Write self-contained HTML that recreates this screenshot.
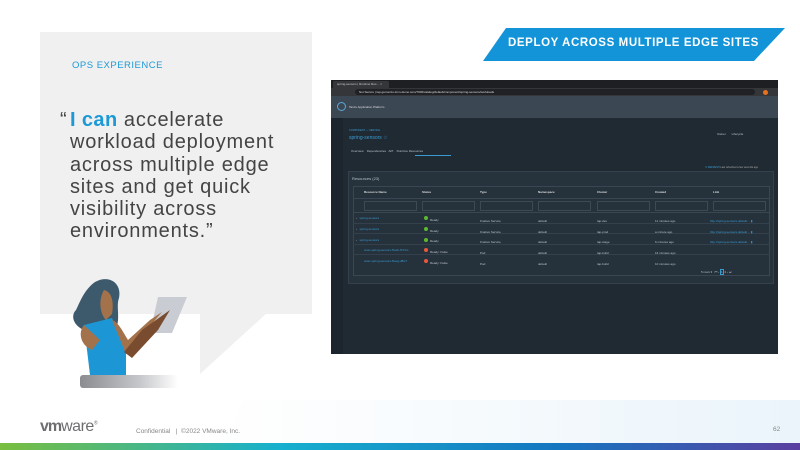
<!DOCTYPE html>
<html><head><meta charset="utf-8"><style>
*{margin:0;padding:0;box-sizing:border-box}
body{width:800px;height:450px;position:relative;overflow:hidden;background:#fff;font-family:"Liberation Sans",sans-serif}
.a{position:absolute}
.t{font-size:3px;color:#b8c0c8;white-space:nowrap}
.l{font-size:3px;color:#3a9bd1;white-space:nowrap}
</style></head><body>
<!-- gray card -->
<div class="a" style="left:40px;top:32px;width:272px;height:282px;background:#f0f0f1"></div>
<svg class="a" style="left:0;top:0" width="800" height="450"><polygon points="200,313 267,313 200,374" fill="#f0f0f1"/></svg>
<div class="a" style="left:72px;top:60px;font-size:9.5px;color:#1d9ad6;letter-spacing:.5px">OPS EXPERIENCE</div>
<div class="a" style="left:60px;top:109px;font-size:20px;line-height:22.3px;color:#444;width:260px;white-space:nowrap;letter-spacing:.8px"><span style="position:absolute;left:0;top:0">“</span><div style="padding-left:10px"><b style="color:#1d9ad6;letter-spacing:.4px">I can</b> accelerate<br>workload deployment<br>across multiple edge<br>sites and get quick<br>visibility across<br>environments.”</div></div>
<!-- figure -->
<svg class="a" style="left:0;top:0" width="800" height="450">
<defs><linearGradient id="pd" x1="0" x2="1"><stop offset="0" stop-color="#8a8c90"/><stop offset=".6" stop-color="#c4c6c9"/><stop offset="1" stop-color="#fff"/></linearGradient></defs>
<rect x="80" y="375" width="98" height="13" rx="3" fill="url(#pd)"/>
<polygon points="158,297 187,297 172,333 150,333" fill="#c9ccd2"/>
<path d="M95,282 C110,274 122,284 119,298 C116,306 120,316 117,326 C110,334 95,336 84,330 C74,326 70,316 76,310 C80,302 84,290 95,282Z" fill="#3d5a6c"/>
<path d="M104,290 C112,292 114,302 112,314 L106,320 C100,314 98,300 104,290Z" fill="#a3724b"/>
<path d="M84,325 L112,318 L126,352 L126,375 L90,375 Z" fill="#1d96d6"/>
<path d="M112,320 C118,322 122,330 128,340 L150,320 L162,312 L150,326 L132,352 L126,354Z" fill="#a3724b"/>
<path d="M124,352 L142,330 L170,310 L158,330 L132,358 Z" fill="#7a4c2f"/>
<path d="M84,325 C78,332 80,345 92,350 L100,340 Z" fill="#a3724b"/>
</svg>
<!-- banner -->
<svg class="a" style="left:0;top:0" width="800" height="450"><polygon points="506,28 785,28 754,61 483,61" fill="#1494d8"/></svg>
<div class="a" style="left:508px;top:37px;font-size:11.5px;color:#fff;font-weight:bold;letter-spacing:.6px">DEPLOY ACROSS MULTIPLE EDGE SITES</div>
<!-- screenshot -->
<div class="a" style="left:331px;top:80px;width:447px;height:274px;background:#202a33">
 <div class="a" style="left:0;top:0;width:447px;height:8px;background:#1e1f22"></div>
 <div class="a" style="left:2px;top:1px;width:56px;height:7px;background:#35363a;border-radius:2px 2px 0 0"></div>
 <div class="a t" style="left:6px;top:2px;color:#ccc">spring-sensors | Runtime Res…  ×</div>
 <div class="a" style="left:0;top:8px;width:447px;height:8px;background:#35363a"></div>
 <div class="a" style="left:24px;top:9px;width:400px;height:6px;background:#202124;border-radius:3px"></div>
 <div class="a t" style="left:28px;top:10px;color:#ddd">Not Secure | tap-gui.tanzu-tmm-demo.com/7000/catalog/default/component/spring-sensors/workloads</div>
 <div class="a" style="left:432px;top:10px;width:5px;height:5px;border-radius:50%;background:#e8711c"></div>
 <div class="a" style="left:0;top:16px;width:447px;height:22px;background:#3c4754"></div>
 <div class="a" style="left:6px;top:22px;width:9px;height:9px;border-radius:50%;border:1px solid #5aa8d8"></div>
 <div class="a t" style="left:18px;top:25px;color:#ddd">Tanzu Application Platform</div>
 <div class="a" style="left:0;top:38px;width:12px;height:236px;background:#1c252d"></div>
 <div class="a l" style="left:18px;top:49px;font-size:2.5px">COMPONENT — SERVICE</div>
 <div class="a l" style="left:18px;top:55px;font-size:5px">spring-sensors ☆</div>
 <div class="a t" style="left:386px;top:52px">Owner&nbsp;&nbsp;&nbsp;&nbsp;&nbsp;&nbsp;&nbsp;Lifecycle</div>
 <div class="a t" style="left:20px;top:69px">Overview&nbsp;&nbsp;&nbsp;&nbsp;Dependencies&nbsp;&nbsp;&nbsp;API&nbsp;&nbsp;&nbsp;&nbsp;Runtime Resources</div>
 <div class="a" style="left:84px;top:75px;width:36px;height:1px;background:#3a9bd1"></div>
 <div class="a l" style="left:374px;top:86px;font-size:2.5px">⟳ REFRESH <span style="color:#aaa">Last refreshed a few seconds ago</span></div>
 <div class="a" style="left:17px;top:91px;width:426px;height:113px;background:#26323c;border:1px solid #34414c"></div>
 <div class="a t" style="left:21px;top:96px;font-size:4px">Resources (23)</div>
 <div class="a" style="left:22px;top:106px;width:417px;height:90px;border:1px solid #3a4752;background:#25313b"></div>
 <div class="a" style="left:22px;top:118px;width:417px;height:15px;border-top:1px solid #3a4752;border-bottom:1px solid #3a4752"></div>
 <div class="a t" style="left:33px;top:110px;color:#ddd;font-weight:bold">Resource Name</div>
 <div class="a t" style="left:91px;top:110px;color:#ddd;font-weight:bold">Status</div>
 <div class="a t" style="left:149px;top:110px;color:#ddd;font-weight:bold">Type</div>
 <div class="a t" style="left:207px;top:110px;color:#ddd;font-weight:bold">Namespace</div>
 <div class="a t" style="left:266px;top:110px;color:#ddd;font-weight:bold">Cluster</div>
 <div class="a t" style="left:324px;top:110px;color:#ddd;font-weight:bold">Created</div>
 <div class="a t" style="left:382px;top:110px;color:#ddd;font-weight:bold">Link</div>
 <div class="a" style="left:33px;top:121px;width:53px;height:10px;border:1px solid #3d4a55"></div>
 <div class="a" style="left:91px;top:121px;width:53px;height:10px;border:1px solid #3d4a55"></div>
 <div class="a" style="left:149px;top:121px;width:53px;height:10px;border:1px solid #3d4a55"></div>
 <div class="a" style="left:207px;top:121px;width:53px;height:10px;border:1px solid #3d4a55"></div>
 <div class="a" style="left:266px;top:121px;width:53px;height:10px;border:1px solid #3d4a55"></div>
 <div class="a" style="left:324px;top:121px;width:53px;height:10px;border:1px solid #3d4a55"></div>
 <div class="a" style="left:382px;top:121px;width:53px;height:10px;border:1px solid #3d4a55"></div>
 <div class="a" style="left:22px;top:143px;width:417px;height:11px;border-top:1px solid #34414c;border-bottom:1px solid #34414c"></div>
 <div class="a" style="left:22px;top:164px;width:417px;height:11px;border-top:1px solid #34414c;border-bottom:1px solid #34414c"></div>
 <div class="a t" style="left:25px;top:136px">›&nbsp;&nbsp;&nbsp;<span style="color:#3a9bd1">spring-sensors</span></div>
 <div class="a t" style="left:25px;top:147px">›&nbsp;&nbsp;&nbsp;<span style="color:#3a9bd1">spring-sensors</span></div>
 <div class="a t" style="left:25px;top:158px">›&nbsp;&nbsp;&nbsp;<span style="color:#3a9bd1">spring-sensors</span></div>
 <div class="a l" style="left:33px;top:168px">scan-spring-sensors-5wsh-5t74m</div>
 <div class="a l" style="left:33px;top:179px">scan-spring-sensors-8vwg-d8tc7</div>
 <div class="a" style="left:93px;top:136px;width:4px;height:4px;border-radius:50%;background:#5cb82e"></div>
 <div class="a" style="left:93px;top:147px;width:4px;height:4px;border-radius:50%;background:#5cb82e"></div>
 <div class="a" style="left:93px;top:158px;width:4px;height:4px;border-radius:50%;background:#5cb82e"></div>
 <div class="a" style="left:93px;top:168px;width:4px;height:4px;border-radius:50%;background:#e8573e"></div>
 <div class="a" style="left:93px;top:179px;width:4px;height:4px;border-radius:50%;background:#e8573e"></div>
 <div class="a t" style="left:99px;top:135px;line-height:10.7px">Ready<br>Ready<br>Ready<br>Ready: False<br>Ready: False</div>
 <div class="a t" style="left:149px;top:136px;line-height:10.7px">Knative Service<br>Knative Service<br>Knative Service<br>Pod<br>Pod</div>
 <div class="a t" style="left:207px;top:136px;line-height:10.7px">default<br>default<br>default<br>default<br>default</div>
 <div class="a t" style="left:266px;top:136px;line-height:10.7px">tap-dev<br>tap-prod<br>tap-stage<br>tap-build<br>tap-build</div>
 <div class="a t" style="left:324px;top:136px;line-height:10.7px">11 minutes ago<br>a minute ago<br>6 minutes ago<br>16 minutes ago<br>10 minutes ago</div>
 <div class="a l" style="left:379px;top:136px;line-height:10.7px">http://spring-sensors.default… ▮<br>http://spring-sensors.default… ▮<br>http://spring-sensors.default… ▮</div>
 <div class="a t" style="left:370px;top:190px">5 rows ▾ &nbsp;&nbsp;⏮ ‹ <span style="border:1px solid #3a9bd1">1</span> 2 › ⏭</div>
</div>
<!-- footer -->
<svg class="a" style="left:0;top:0" width="800" height="450"><defs><linearGradient id="bg" x1="0" x2="1"><stop offset="0" stop-color="#fff"/><stop offset="1" stop-color="#e8f3fa"/></linearGradient><linearGradient id="bar" x1="0" x2="1"><stop offset="0" stop-color="#78be3f"/><stop offset=".35" stop-color="#17b0cf"/><stop offset=".7" stop-color="#1575c0"/><stop offset="1" stop-color="#5b3fa0"/></linearGradient></defs>
<polygon points="243,400 800,400 800,443 215,443" fill="url(#bg)" opacity=".9"/>
<rect x="0" y="443" width="800" height="7" fill="url(#bar)"/></svg>
<div class="a" style="left:40px;top:418px;font-size:16px;color:#6d6e71;letter-spacing:-.5px"><b style="letter-spacing:-1px">vm</b>ware<sup style="font-size:5px">®</sup></div>
<div class="a" style="left:136px;top:428px;font-size:6.5px;color:#888">Confidential &nbsp;&nbsp;| &nbsp;©2022 VMware, Inc.</div>
<div class="a" style="left:773px;top:426px;font-size:6.5px;color:#888">62</div>
</body></html>
